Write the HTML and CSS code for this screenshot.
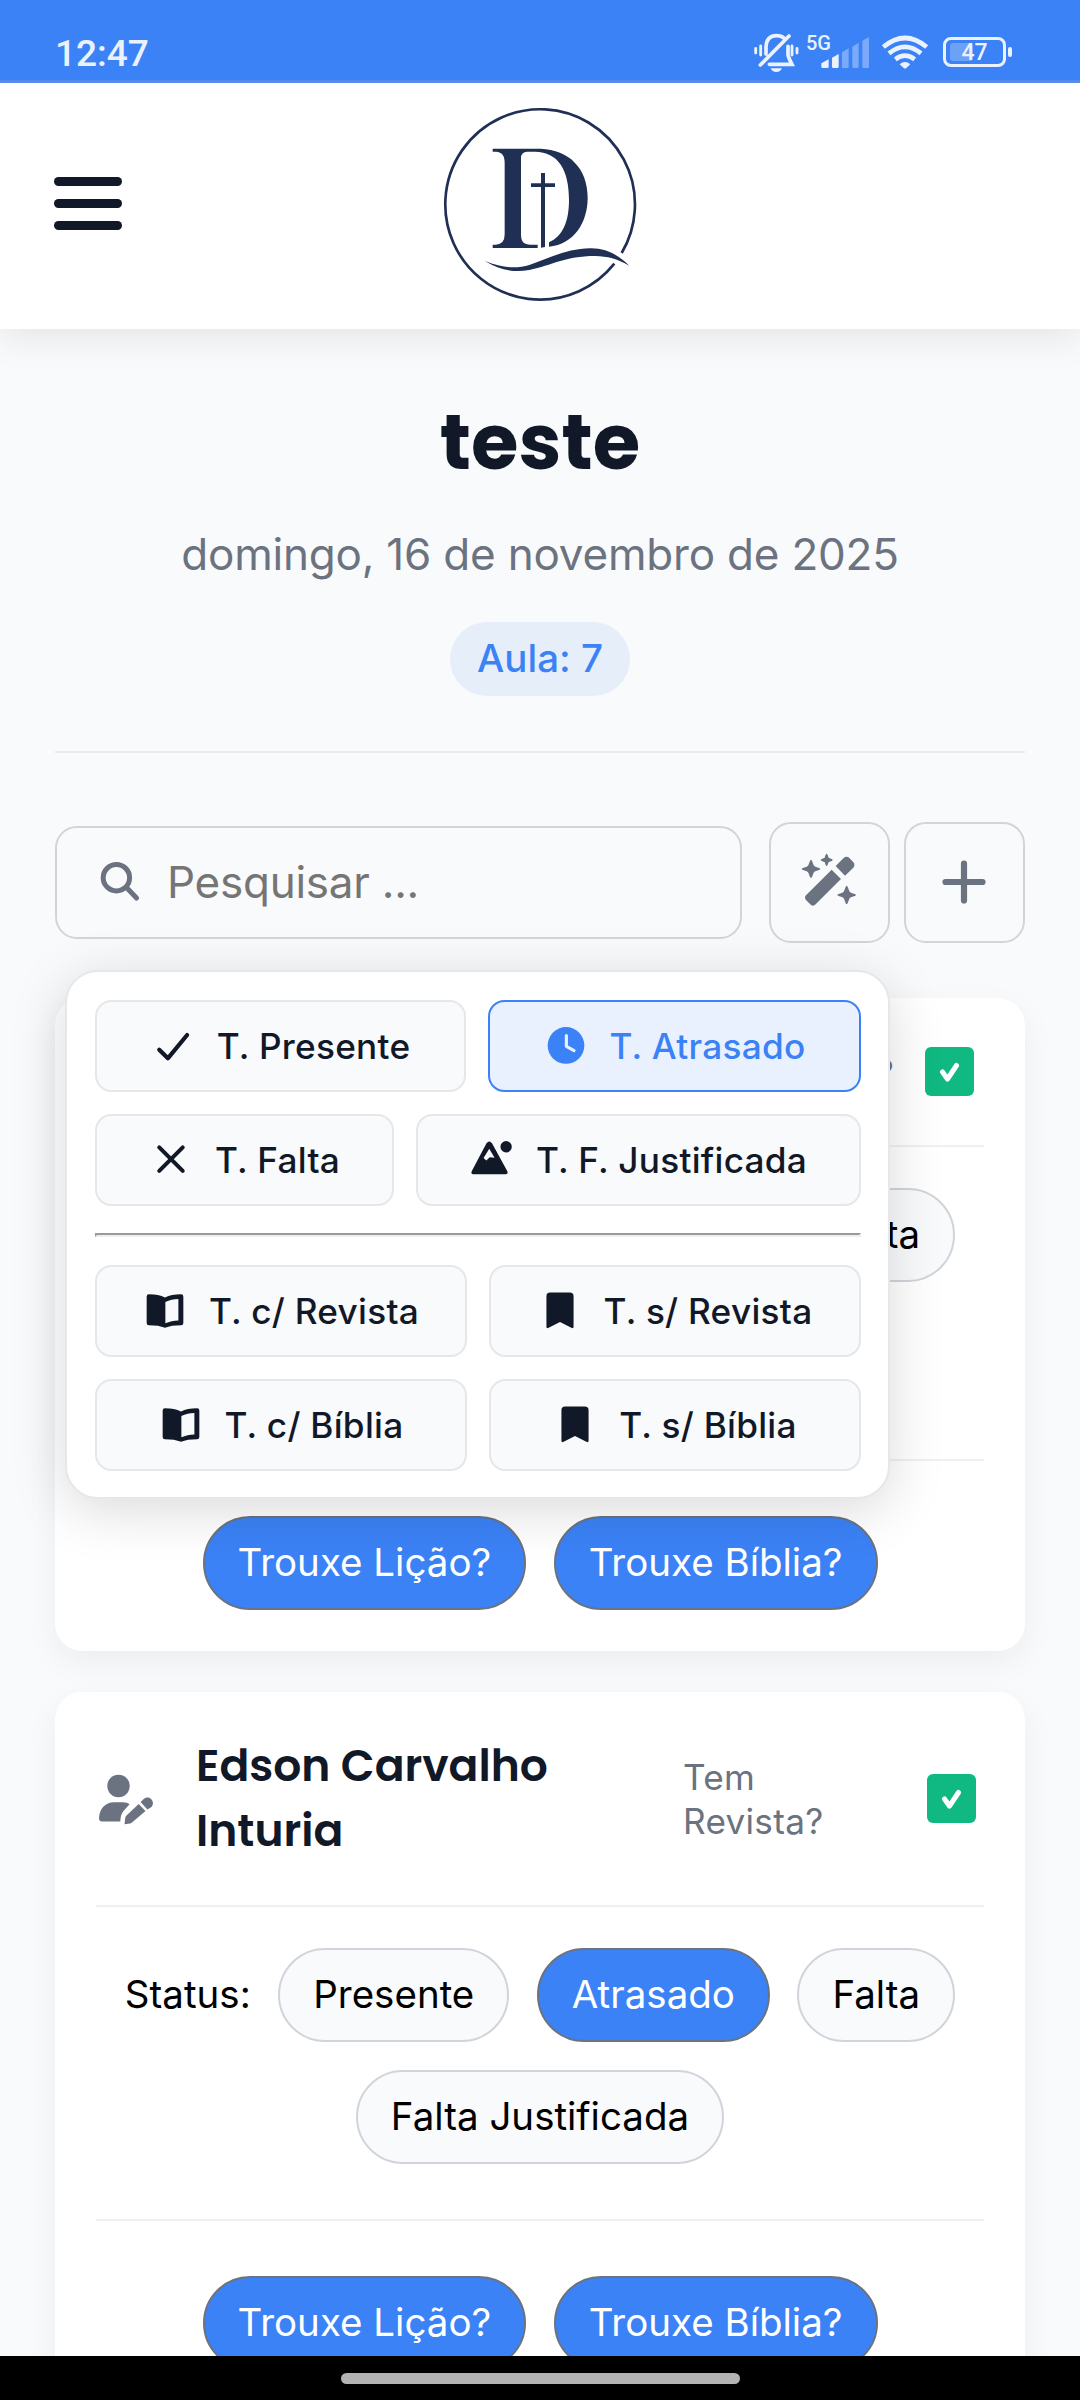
FILE: index.html
```html
<!DOCTYPE html>
<html lang="pt-BR">
<head>
<meta charset="utf-8">
<title>Chamada</title>
<link rel="stylesheet" href="styles.css">
</head>
<body>
<svg class="defs" width="0" height="0" aria-hidden="true">
  <symbol id="book" viewBox="0 0 24 24"><path fill="currentColor" fill-rule="evenodd" d="M3.2 2.9C7 2.9 9.5 3.5 12 4.7C14.5 3.5 17 2.9 20.8 2.9Q22 2.9 22 4.1V18.6Q22 19.8 20.8 19.8C17 19.8 14.5 20.2 12 21.2C9.500 20.2 7 19.800 3.200 19.800Q2 19.800 2 18.600V4.100Q2 2.900 3.200 2.900ZM12.200 7.100V18.700C14.500 17.800 16.700 17.300 19.300 17.200V5.500C16.700 5.600 14.500 6.100 12.200 7.100Z"/></symbol>
  <symbol id="bookmark" viewBox="0 0 24 24"><path fill="currentColor" d="M6.600 1.900H17.400Q19.400 1.900 19.400 3.900V20.500Q19.400 21.900 18.200 21.200L12 18L5.800 21.200Q4.600 21.900 4.600 20.500V3.900Q4.600 1.900 6.600 1.900Z"/></symbol>
</svg>
<div class="screen">
  <div class="statusbar">
    <span class="clock">12:47</span>
    <div class="sysicons">
      <svg class="bell" viewBox="155 95 150 125" fill="none" stroke="currentColor" stroke-linecap="round">
        <path stroke-width="11" d="M197 161V139Q199 106 229 106Q243 106 252 114M263 138V164Q265 173 275 192H207M180 194L266 107"/>
        <path stroke-width="8.500" d="M166 144V158M181 137V164M275 137V164M290 144V158"/>
        <path stroke="none" fill="currentColor" d="M211 204H245Q241 215 228 215Q215 215 211 204Z"/>
      </svg>
      <span class="net">5G</span>
      <svg class="bars" viewBox="360 105 150 105" fill="currentColor">
        <path d="M364 190L386 178V200Q386 204 382 204H368Q364 204 364 200ZM396 173L416 162V200Q416 204 412 204H400Q396 204 396 200Z"/>
        <path opacity=".36" d="M426 157L446 145V200Q446 204 442 204H430Q426 204 426 200ZM457 140L476 128V200Q476 204 472 204H461Q457 204 457 200ZM487 122L507 111V200Q507 204 503 204H491Q487 204 487 200Z"/>
      </svg>
      <svg class="wifi" viewBox="540 100 150 110" fill="none" stroke="currentColor" stroke-width="14">
        <path d="M550 142Q615 88 680 142M567 161Q615 122 663 161M586 179Q615 157 644 179"/>
        <path stroke="none" fill="currentColor" d="M599 194Q615 180 631 194L619 205Q615 208 611 205Z"/>
      </svg>
      <div class="battery"><span>47</span></div>
    </div>
  </div>

  <div class="viewport">
    <header class="topbar">
      <div class="burger"><i></i><i></i><i></i></div>
      <svg class="logo" viewBox="0 0 720 690">
        <path fill="none" stroke="#203054" stroke-width="8" d="M605 486A284.500 285.500 0 1 0 583 518"/>
        <g fill="#203054">
          <path fill-rule="evenodd" d="M218 173H362C447 176 503 232 503 320C503 395 462 459 387 467V454C428 436 447 392 447 327C447 235 414 183 345 182H322Q303 182 303 202V430C303 452 311 461 332 461H353V471H218V461H228Q254 460 254 430V215C254 194 246 183 228 182H218Z"/>
          <path d="M363 246H375V277H405V288H375V468L363 470V288H333V277H363Z"/>
          <path d="M195 510C246 530 285 535 330 521C390 499 445 473 510 472C560 471 596 493 628 524C590 503 563 496 525 495C435 495 397 523 328 537C278 546 237 536 195 510Z"/>
        </g>
      </svg>
    </header>

    <main class="content">
      <section class="intro">
        <h1>teste</h1>
        <p>domingo, 16 de novembro de 2025</p>
        <span class="badge">Aula: 7</span>
      </section>

      <div class="tools">
        <div class="search">
          <svg viewBox="0 0 40 40" fill="none" stroke="currentColor" stroke-width="5" stroke-linecap="round"><circle cx="16.400" cy="16.700" r="13.200"/><path d="M26.500 26.500L36.500 37"/></svg>
          <span>Pesquisar ...</span>
        </div>
        <div class="toolbtns">
          <button class="tool"><svg viewBox="178 157 180 180" fill="currentColor"><path d="M276 210L304 238L228 314Q221 321 214 316L199 301Q193 293 199 287ZM288 199L312 175Q321 168 329 175L340 186Q348 195 341 204L316 228ZM214 180Q216 180 218 186L222 197Q224 200 227 201L238 205Q246 208 238 211L227 215Q224 216 222 219L218 230Q214 240 210 230L206 219Q204 216 201 215L190 211Q182 208 190 205L201 201Q204 200 206 197L210 186Q212 180 214 180ZM261 162Q263 162 267 174Q279 178 279 181Q279 184 267 187Q263 199 261 199Q258 199 255 187Q243 184 243 181Q243 178 255 174Q258 162 261 162ZM321 258Q323 258 325 264L329 275Q331 278 334 279L345 283Q353 286 345 289L334 293Q331 294 329 297L325 308Q321 320 317 308L313 297Q311 294 308 293L297 289Q289 286 297 283L308 279Q311 278 313 275L317 264Q319 258 321 258Z"/></svg></button>
          <button class="tool"><svg viewBox="0 0 60 60" fill="none" stroke="currentColor" stroke-width="6.200" stroke-linecap="round"><path d="M30 11.500V48.500M11.500 30H48.500"/></svg></button>
        </div>

        <div class="menu">
          <div class="menurow">
            <button class="opt w371"><svg viewBox="0 0 24 24" fill="none" stroke="currentColor" stroke-width="2.300" stroke-linecap="round" stroke-linejoin="round"><path d="M4.500 14L9.200 18.700L19.700 6"/></svg>T. Presente</button>
            <button class="opt active"><svg viewBox="0 0 24 24"><circle cx="12" cy="11.700" r="10" fill="currentColor"/><path d="M12.200 6.300V12.200L16.400 14.500" fill="none" stroke="#eaf1fe" stroke-width="1.700" stroke-linecap="round" stroke-linejoin="round"/></svg>T. Atrasado</button>
          </div>
          <div class="menurow">
            <button class="opt w299"><svg viewBox="0 0 24 24" fill="none" stroke="currentColor" stroke-width="2.200" stroke-linecap="round"><path d="M5.600 5.100L18.400 17.900M18.400 5.100L5.600 17.900"/></svg>T. Falta</button>
            <button class="opt"><svg viewBox="0 0 24 24" fill="currentColor"><path fill-rule="evenodd" d="M9 2.900Q10.500 .8 12 2.900L20.300 18Q21 19.800 19.300 19.800H2Q.2 19.800 1 18ZM10.500 5.800L7.400 10.900L8.900 12.300L10.800 10.500L13.400 10.800Z"/><circle cx="19.700" cy="4.800" r="3.100"/></svg>T. F. Justificada</button>
          </div>
          <hr>
          <div class="menurow">
            <button class="opt"><svg><use href="#book"/></svg>T. c/ Revista</button>
            <button class="opt"><svg><use href="#bookmark"/></svg>T. s/ Revista</button>
          </div>
          <div class="menurow">
            <button class="opt"><svg><use href="#book"/></svg>T. c/ Bíblia</button>
            <button class="opt"><svg><use href="#bookmark"/></svg>T. s/ Bíblia</button>
          </div>
        </div>
      </div>

      <article class="card">
        <div class="cardhead short">
          <span class="has">Tem Revista?</span>
          <svg class="check" viewBox="0 0 49 49"><rect width="49" height="49" rx="6" fill="#10b981"/><path d="M17.500 25L22.500 32L31.500 18.500" fill="none" stroke="#fff" stroke-width="5" stroke-linecap="round" stroke-linejoin="round"/></svg>
        </div>
        <div class="chips status"><span>Status:</span><span class="chip">Presente</span><span class="chip on">Atrasado</span><span class="chip">Falta</span><span class="chip">Falta Justificada</span></div>
        <div class="chips brought"><span class="chip on">Trouxe Lição?</span><span class="chip on">Trouxe Bíblia?</span></div>
      </article>

      <article class="card">
        <div class="cardhead">
          <svg class="person" viewBox="0 0 58 56" fill="currentColor"><circle cx="21.500" cy="14" r="11.200"/><path d="M2 46C2.500 37 8 30.200 17 30.200H26C29 30.200 31 31 32.600 32.300L26.500 39C24 42 23.500 45 23.300 49.500H5Q2 49.500 2 46ZM27.500 52.300L28.300 45.500Q28.600 44.500 29.500 43.500L41.700 31.900L48.500 39L35 50.500Q34 51.300 33 51.600ZM43.600 30L47 26.800C52 22.500 59 29 54.500 35L50.400 37.600Z"/></svg>
          <h2>Edson Carvalho<br>Inturia</h2>
          <span class="has">Tem<br>Revista?</span>
          <svg class="check" viewBox="0 0 49 49"><rect width="49" height="49" rx="6" fill="#10b981"/><path d="M17.500 25L22.500 32L31.500 18.500" fill="none" stroke="#fff" stroke-width="5" stroke-linecap="round" stroke-linejoin="round"/></svg>
        </div>
        <div class="chips status"><span>Status:</span><span class="chip">Presente</span><span class="chip on">Atrasado</span><span class="chip">Falta</span><span class="chip">Falta Justificada</span></div>
        <div class="chips brought"><span class="chip on">Trouxe Lição?</span><span class="chip on">Trouxe Bíblia?</span></div>
      </article>
    </main>
  </div>

  <div class="navbar"><i></i></div>
</div>
</body>
</html>
```
FILE: styles.css
```css
* { box-sizing: border-box; }
body { margin: 0; font-family: Inter, "Liberation Sans", sans-serif; background: #f9fafb; color: #111827; }
button { font: inherit; }
svg { display: block; flex: none; }
.defs { position: absolute; }
.screen { width: 1080px; height: 2400px; display: flex; flex-direction: column; overflow: hidden; }

.statusbar { height: 83px; flex: none; display: flex; justify-content: space-between; align-items: flex-start; padding: 0 68px 0 55px; background: #3b82f6; border-bottom: 3px solid #548bec; color: #ebf2fe; font-family: Roboto, "Liberation Sans", sans-serif; font-weight: 500; }
.clock { font-size: 37px; line-height: 44px; margin-top: 32px; }
.sysicons { display: flex; align-items: flex-start; }
.bell { width: 50px; height: 41.700px; margin-top: 31.700px; }
.net { font-size: 20px; line-height: 24px; margin: 31px 0 0 4px; width: 14px; font-weight: 500; }
.bars { width: 50px; height: 35px; margin-top: 35px; }
.wifi { width: 50px; height: 36.700px; margin: 33.300px 0 0 10px; }
.battery { position: relative; width: 63px; height: 30px; margin: 37px 6px 0 13px; border: 3px solid #ebf2fe; border-radius: 8px; text-align: center; font-size: 23px; line-height: 26px; }
.battery span { position: relative; }
.battery::before { content: ""; position: absolute; left: 4px; top: 3px; width: 23px; height: 18px; border-radius: 3px; background: rgba(255,255,255,.25); }
.battery::after { content: ""; position: absolute; left: 62px; top: 7px; width: 4px; height: 10px; border-radius: 2px; background: #ebf2fe; }

.viewport { height: 2273px; flex: none; overflow: hidden; }
.topbar { height: 246px; display: grid; grid-template-columns: 1fr auto 1fr; align-items: center; padding: 0 54px; background: #fff; box-shadow: 0 11px 33px rgba(0,0,0,.08); }
.burger { display: flex; flex-direction: column; gap: 13px; width: 68px; margin-top: -6px; }
.burger i { height: 9px; border-radius: 5px; background: #111827; }
.logo { width: 240px; height: 230px; margin-top: -1px; }

.content { padding: 0 55px; }
.intro { height: 424px; padding-top: 67px; display: flex; flex-direction: column; align-items: center; border-bottom: 2px solid #e9ebee; }
h1 { margin: 0; font-family: Poppins, Inter, sans-serif; font-size: 77px; line-height: 92px; font-weight: 700; }
.intro p { margin: 38px 0 0; font-size: 44px; line-height: 56px; letter-spacing: -.2px; color: #6b7280; white-space: nowrap; }
.badge { margin-top: 40px; height: 74px; line-height: 72px; padding: 0 27.500px; border-radius: 37px; background: #e6eefa; color: #3b82f6; font-size: 38.500px; font-weight: 500; }

.tools { position: relative; display: flex; justify-content: space-between; align-items: center; margin-top: 69px; height: 121px; }
.search { width: 687px; height: 113px; border: 2px solid #d1d5db; border-radius: 22px; display: flex; align-items: center; gap: 27px; padding-left: 43px; color: #6b7280; }
.search svg { width: 40px; height: 40px; margin-top: -3px; }
.search span { font-size: 44px; letter-spacing: -.25px; color: #757575; margin-top: -2px; }
.toolbtns { display: flex; gap: 14px; }
.tool { width: 121px; height: 121px; padding: 0; border: 2px solid #d1d5db; border-radius: 22px; background: #f9fafb; color: #6b7280; display: grid; place-items: center; }
.tool svg { width: 60px; height: 60px; margin: -1px 0 0 -1px; }

.menu { position: absolute; z-index: 2; left: 10px; top: 148px; width: 825px; height: 529px; padding: 28px 27px 26px 28px; display: flex; flex-direction: column; gap: 22px; background: #fff; border: 2px solid #e5e7eb; border-radius: 33px; box-shadow: 0 11px 55px rgba(0,0,0,.15); }
.menurow { display: flex; gap: 22px; }
.menu hr { width: 100%; margin: 5px 0 6px; height: 4px; flex: none; border: 2px solid #eee; border-color: #9a9a9a #eee #eee #9a9a9a; }
.opt { flex: 1; height: 92px; padding: 0; display: flex; align-items: center; justify-content: center; gap: 22px; background: #f9fafb; border: 2px solid #e5e7eb; border-radius: 16.500px; color: #111827; font-size: 35.200px; font-weight: 500; letter-spacing: .27px; white-space: nowrap; }
.opt svg { width: 44px; height: 44px; }
.opt.w371 { flex: 0 0 371px; }
.opt.w299 { flex: 0 0 299px; }
.opt.active { background: #eaf1fe; border-color: #3b82f6; color: #3b82f6; }

.card { margin-top: 41px; padding: 0 41px 41px; background: #fff; border-radius: 27.500px; box-shadow: 0 11px 33px rgba(0,0,0,.055); }
.tools + .card { margin-top: 55px; }
.cardhead { height: 215px; display: flex; align-items: center; border-bottom: 2px solid #eff0f2; }
.cardhead.short { height: 149px; justify-content: flex-end; }
.person { width: 58px; height: 56px; color: #6b7280; margin: 2px 0 0 1px; }
h2 { margin: -1px 0 0 41px; width: 487px; font-family: Poppins, Inter, sans-serif; font-size: 44px; line-height: 65px; font-weight: 600; }
.has { color: #6b7280; font-size: 35.200px; line-height: 44px; letter-spacing: .27px; white-space: nowrap; }
.short .has { margin-right: 31px; }
.check { width: 49px; height: 49px; margin: 0 8px 0 auto; }
.short .check { margin: 0 10px 0 0; }
.chips { display: flex; flex-wrap: wrap; justify-content: center; align-items: center; font-size: 38.500px; color: #000; }
.status { gap: 28px 27.500px; padding: 41px 0 55px; border-bottom: 2px solid #eff0f2; }
.status > :first-child { margin-top: -2px; }
.brought { gap: 27.500px; padding-top: 55px; }
.chip { height: 94px; line-height: 88px; padding: 0 33px; border: 2px solid #d1d5db; border-radius: 47px; background: #f9fafb; white-space: nowrap; }
.chip.on { background: #3b82f6; border-color: #6b7280; color: #fff; }

.navbar { flex: 1; display: flex; justify-content: center; padding-top: 17px; background: #000; }
.navbar i { width: 399px; height: 11px; border-radius: 6px; background: #b3b3b3; }
```
